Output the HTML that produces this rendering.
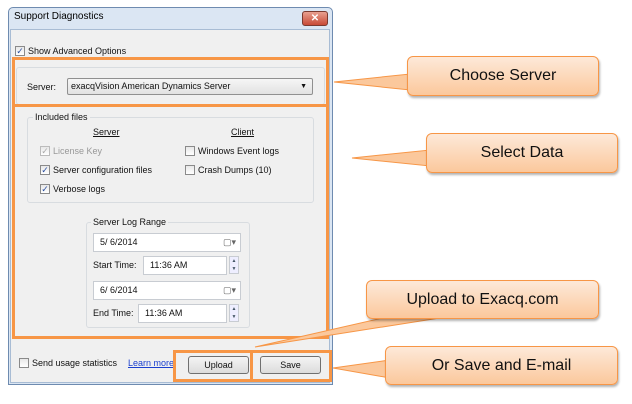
<!DOCTYPE html>
<html><head><meta charset="utf-8"><style>
*{box-sizing:border-box;margin:0;padding:0}
body{width:632px;height:404px;background:#fff;position:relative;overflow:hidden;font-family:"Liberation Sans",sans-serif;font-size:9px;color:#111}
.a{position:absolute;white-space:nowrap}
.cb{position:absolute;width:10px;height:10px;border:1px solid #8a8a8a;background:linear-gradient(#e8e8e8,#fff);font-size:9px;line-height:8px;text-align:center;color:#2a4fa0}
.grp{position:absolute;border:1px solid #d8dce0;border-radius:3px}
.inp{position:absolute;background:#fff;border:1px solid #c8ccd2;padding-left:6px;line-height:17px}
.btn{position:absolute;border:1px solid #707070;border-radius:3px;background:linear-gradient(#f4f4f4,#dcdcdc);text-align:center;line-height:16px}
.or{position:absolute;border:3px solid #f79646}
.call{position:absolute;border:1px solid #f79646;border-radius:6px;background:linear-gradient(#fde9d9,#fbc89c);box-shadow:1px 2px 2px rgba(0,0,0,.3);font-size:16px;text-align:center;color:#111}
.spin{position:absolute;width:10px;height:18px;border:1px solid #c8ccd2;background:#eef;font-size:5px;color:#456;text-align:center;line-height:8px}
</style></head><body>
<div class="a" style="left:8px;top:7px;width:325px;height:378px;background:#dbe6f3;border:1px solid #6e8bb0;border-radius:5px 5px 0 0"></div>
<div class="a" style="left:14px;top:11px;font-size:10px;color:#000">Support Diagnostics</div>
<div class="a" style="left:302px;top:11px;width:26px;height:15px;border:1px solid #7a3a30;border-radius:3px;background:linear-gradient(#e8a090,#c84a36);color:#fff;font-size:10px;text-align:center;line-height:13px;font-weight:bold">✕</div>
<div class="a" style="left:10px;top:29px;width:320px;height:354px;background:#f0f0f0;border:1px solid #a8bcd4"></div>
<div class="cb" style="left:15px;top:46px">✓</div>
<div class="a" style="left:28px;top:46px">Show Advanced Options</div>
<div class="grp" style="left:16px;top:67px;width:309px;height:38px"></div>
<div class="a" style="left:27px;top:82px">Server:</div>
<div class="a" style="left:67px;top:78px;width:246px;height:17px;border:1px solid #909090;border-radius:2px;background:linear-gradient(#f6f6f6,#e2e2e2);padding-left:3px;line-height:15px">exacqVision American Dynamics Server<span style="position:absolute;right:5px;font-size:7px">▼</span></div>
<div class="grp" style="left:27px;top:117px;width:287px;height:86px"></div>
<div class="a" style="left:33px;top:112px;background:#f0f0f0;padding:0 2px">Included files</div>
<div class="a" style="left:93px;top:127px;text-decoration:underline">Server</div>
<div class="a" style="left:231px;top:127px;text-decoration:underline">Client</div>
<div class="cb" style="left:40px;top:146px;color:#aaa;border-color:#bbb">✓</div>
<div class="a" style="left:53px;top:146px;color:#999">License Key</div>
<div class="cb" style="left:40px;top:165px">✓</div>
<div class="a" style="left:53px;top:165px">Server configuration files</div>
<div class="cb" style="left:40px;top:184px">✓</div>
<div class="a" style="left:53px;top:184px">Verbose logs</div>
<div class="cb" style="left:185px;top:146px"></div>
<div class="a" style="left:198px;top:146px">Windows Event logs</div>
<div class="cb" style="left:185px;top:165px"></div>
<div class="a" style="left:198px;top:165px">Crash Dumps (10)</div>
<div class="grp" style="left:86px;top:222px;width:164px;height:106px"></div>
<div class="a" style="left:91px;top:217px;background:#f0f0f0;padding:0 2px">Server Log Range</div>
<div class="inp" style="left:93px;top:233px;width:148px;height:19px">5/ 6/2014<span style="position:absolute;right:4px;color:#666">▢▾</span></div>
<div class="a" style="left:93px;top:260px">Start Time:</div>
<div class="inp" style="left:143px;top:256px;width:84px;height:19px">11:36 AM</div>
<div class="spin" style="left:229px;top:256px">▲<br>▼</div>
<div class="inp" style="left:93px;top:281px;width:148px;height:19px">6/ 6/2014<span style="position:absolute;right:4px;color:#666">▢▾</span></div>
<div class="a" style="left:93px;top:308px">End Time:</div>
<div class="inp" style="left:138px;top:304px;width:89px;height:19px">11:36 AM</div>
<div class="spin" style="left:229px;top:304px">▲<br>▼</div>
<div class="cb" style="left:19px;top:358px;color:#000"></div>
<div class="a" style="left:32px;top:358px">Send usage statistics</div>
<div class="a" style="left:128px;top:358px;color:#1a3fcf;text-decoration:underline">Learn more</div>
<div class="btn" style="left:188px;top:356px;width:61px;height:18px">Upload</div>
<div class="btn" style="left:260px;top:356px;width:61px;height:18px">Save</div>
<div class="or" style="left:12px;top:57px;width:317px;height:50px"></div>
<div class="or" style="left:12px;top:104px;width:317px;height:235px"></div>
<div class="or" style="left:173px;top:350px;width:80px;height:32px"></div>
<div class="or" style="left:250px;top:350px;width:82px;height:32px"></div>
<svg class="a" style="left:0;top:0" width="632" height="404">
<g fill="#fbc89c" stroke="#f79646" stroke-width="1">
<polygon points="334,82 410,74 410,90"/>
<polygon points="352,158 430,150 430,166"/>
<polygon points="255,347 400,314 465,314"/>
<polygon points="333,368 390,360 390,378"/>
</g></svg>
<div class="call" style="left:407px;top:56px;width:192px;height:40px;line-height:38px">Choose Server</div>
<div class="call" style="left:426px;top:133px;width:192px;height:40px;line-height:38px">Select Data</div>
<div class="call" style="left:366px;top:280px;width:233px;height:39px;line-height:37px">Upload to Exacq.com</div>
<div class="call" style="left:385px;top:346px;width:233px;height:39px;line-height:37px">Or Save and E-mail</div>
</body></html>
